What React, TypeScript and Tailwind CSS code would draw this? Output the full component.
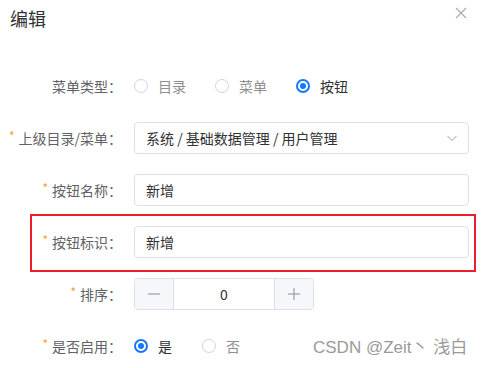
import React from "react";

const font = { fontFamily: '"Noto Sans CJK SC", "Noto Sans", sans-serif' };

function Star() {
  return <span className="text-[#ff9a2e] text-[12px] mr-[4px] relative top-[-2px]">*</span>;
}

function Label({ text, req, w }: { text: string; req?: boolean; w: string }) {
  return (
    <div className={`${w} shrink-0 flex items-center justify-end pr-[12px] text-[14px] text-[#606266]`}>
      {req && <Star />}
      <span>{text}</span>
    </div>
  );
}

function Radio({ checked, label }: { checked?: boolean; label: string }) {
  return (
    <div className="flex items-center">
      {checked ? (
        <span className="w-[14px] h-[14px] rounded-full border-[2px] border-[#1677ff] flex items-center justify-center">
          <span className="w-[6px] h-[6px] rounded-full bg-[#1677ff]" />
        </span>
      ) : (
        <span className="w-[14px] h-[14px] rounded-full border border-[#d4d4d4]" />
      )}
      <span className={`ml-[10px] text-[14px] ${checked ? "text-[#303133]" : "text-[#8f8f8f]"}`}>{label}</span>
    </div>
  );
}

function TextInput({ value }: { value: string }) {
  return (
    <div className="flex-1 h-[32px] border border-[#dcdfe6] rounded-[4px] flex items-center px-[11px] text-[14px] text-[#303133]">
      {value}
    </div>
  );
}

export default function App() {
  return (
    <div style={font} className="relative w-[484px] h-[368px] bg-white overflow-hidden">
      <div className="flex items-start justify-between pl-[10px] pr-[17px] pt-[5px]">
        <div className="text-[18px] leading-[26px] text-[#303133]">编辑</div>
        <svg width="12" height="12" viewBox="0 0 12 12" className="mt-[2px]">
          <path d="M1 1 L11 11 M11 1 L1 11" stroke="#a8abb2" strokeWidth="1.2" />
        </svg>
      </div>

      <div className="mt-[39px] pr-[15px]">
        <div className="flex h-[32px]">
          <Label text="菜单类型：" w="w-[134px]" />
          <div className="flex items-center gap-[29px]">
            <Radio label="目录" />
            <Radio label="菜单" />
            <Radio checked label="按钮" />
          </div>
        </div>

        <div className="flex h-[32px] mt-[20px]">
          <Label text="上级目录/菜单：" req w="w-[134px]" />
          <div className="flex-1 h-[32px] border border-[#dcdfe6] rounded-[4px] flex items-center justify-between pl-[11px] pr-[10px] text-[14px] text-[#303133]">
            <span>系统 / 基础数据管理 / 用户管理</span>
            <svg width="12" height="12" viewBox="0 0 12 12">
              <path d="M1.5 4 L6 8.5 L10.5 4" stroke="#c0c4cc" strokeWidth="1.1" fill="none" />
            </svg>
          </div>
        </div>

        <div className="flex h-[32px] mt-[20px]">
          <Label text="按钮名称：" req w="w-[134px]" />
          <TextInput value="新增" />
        </div>

        <div className="ml-[30px] mr-[-7px] mt-[8px] border-[2px] border-[#e8202a] pt-[10px] pb-[12px] pr-[5px]">
          <div className="flex h-[32px]">
            <Label text="按钮标识：" req w="w-[102px]" />
            <TextInput value="新增" />
          </div>
        </div>

        <div className="flex h-[32px] mt-[6px]">
          <Label text="排序：" req w="w-[134px]" />
          <div className="w-[180px] h-[32px] border border-[#dcdfe6] rounded-[4px] flex overflow-hidden">
            <div className="w-[39px] bg-[#f5f7fa] border-r border-[#dcdfe6] flex items-center justify-center">
              <svg width="14" height="14" viewBox="0 0 14 14">
                <path d="M1 7 H13" stroke="#8a8d94" strokeWidth="1" />
              </svg>
            </div>
            <div className="flex-1 flex items-center justify-center text-[14px] text-[#303133]">0</div>
            <div className="w-[39px] bg-[#f5f7fa] border-l border-[#dcdfe6] flex items-center justify-center">
              <svg width="14" height="14" viewBox="0 0 14 14">
                <path d="M1 7 H13 M7 1 V13" stroke="#8a8d94" strokeWidth="1" />
              </svg>
            </div>
          </div>
        </div>

        <div className="flex h-[32px] mt-[20px]">
          <Label text="是否启用：" req w="w-[134px]" />
          <div className="flex items-center gap-[30px]">
            <Radio checked label="是" />
            <Radio label="否" />
          </div>
        </div>
      </div>

      <div
        className="absolute left-[313px] top-[336px] text-[17px] leading-[24px] text-[#9a9a9a] whitespace-nowrap"
        style={{ fontFamily: '"Liberation Sans", "Noto Sans CJK SC", sans-serif' }}
      >
        CSDN @Zeit丶 浅白
      </div>
    </div>
  );
}
